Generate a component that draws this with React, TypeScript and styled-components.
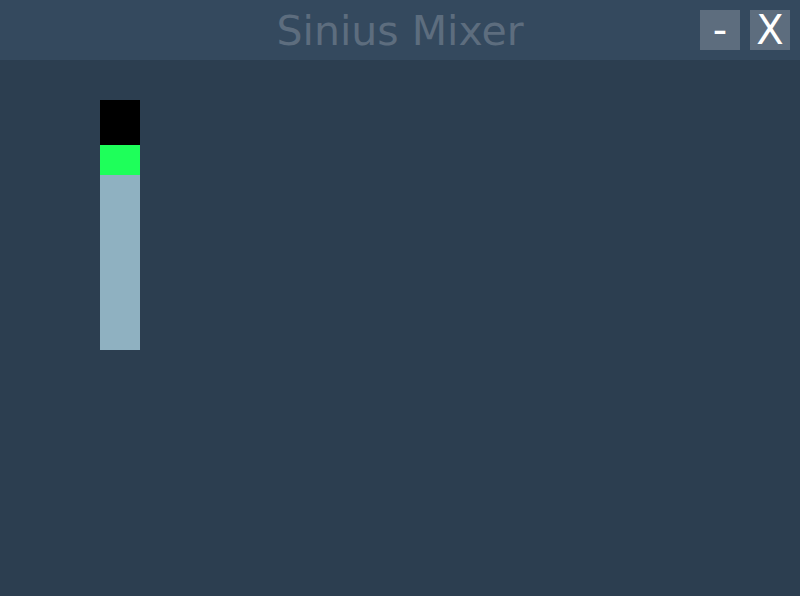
import React from "react";
import styled, { createGlobalStyle } from "styled-components";

const Global = createGlobalStyle`
  html, body { margin: 0; padding: 0; background: #2c3e50; }
  body { font-family: "DejaVu Sans", Verdana, sans-serif; }
`;

const Page = styled.div`
  width: 800px;
  height: 596px;
  background: #2c3e50;
  display: flex;
  flex-direction: column;
  overflow: hidden;
`;

const TitleBar = styled.header`
  height: 60px;
  background: #34495e;
  display: flex;
  align-items: center;
  justify-content: center;
  position: relative;
`;

const Title = styled.h1`
  margin: 0;
  padding-top: 2px;
  font-family: "DejaVu Sans", sans-serif;
  font-weight: normal;
  font-size: 41px;
  line-height: 60px;
  color: #5d6d7e;
`;

const Controls = styled.div`
  position: absolute;
  top: 10px;
  right: 10px;
  display: flex;
  gap: 10px;
`;

const WinButton = styled.button`
  width: 40px;
  height: 40px;
  padding: 0;
  border: none;
  background: #5d6d7e;
  color: #ffffff;
  font-family: "DejaVu Sans", sans-serif;
  font-size: 40px;
  line-height: 40px;
  display: flex;
  align-items: center;
  justify-content: center;
`;

const Body = styled.main`
  flex: 1;
  padding: 40px 100px;
  display: flex;
`;

const Meter = styled.div`
  width: 40px;
  height: 250px;
  display: flex;
  flex-direction: column;
`;

const Segment = styled.div<{ $h: number; $c: string }>`
  height: ${(p) => p.$h}px;
  background: ${(p) => p.$c};
`;

export default function App() {
  return (
    <Page>
      <Global />
      <TitleBar>
        <Title>Sinius Mixer</Title>
        <Controls>
          <WinButton>-</WinButton>
          <WinButton>X</WinButton>
        </Controls>
      </TitleBar>
      <Body>
        <Meter>
          <Segment $h={45} $c="#000000" />
          <Segment $h={30} $c="#1eff5a" />
          <Segment $h={175} $c="#8fb1c1" />
        </Meter>
      </Body>
    </Page>
  );
}
